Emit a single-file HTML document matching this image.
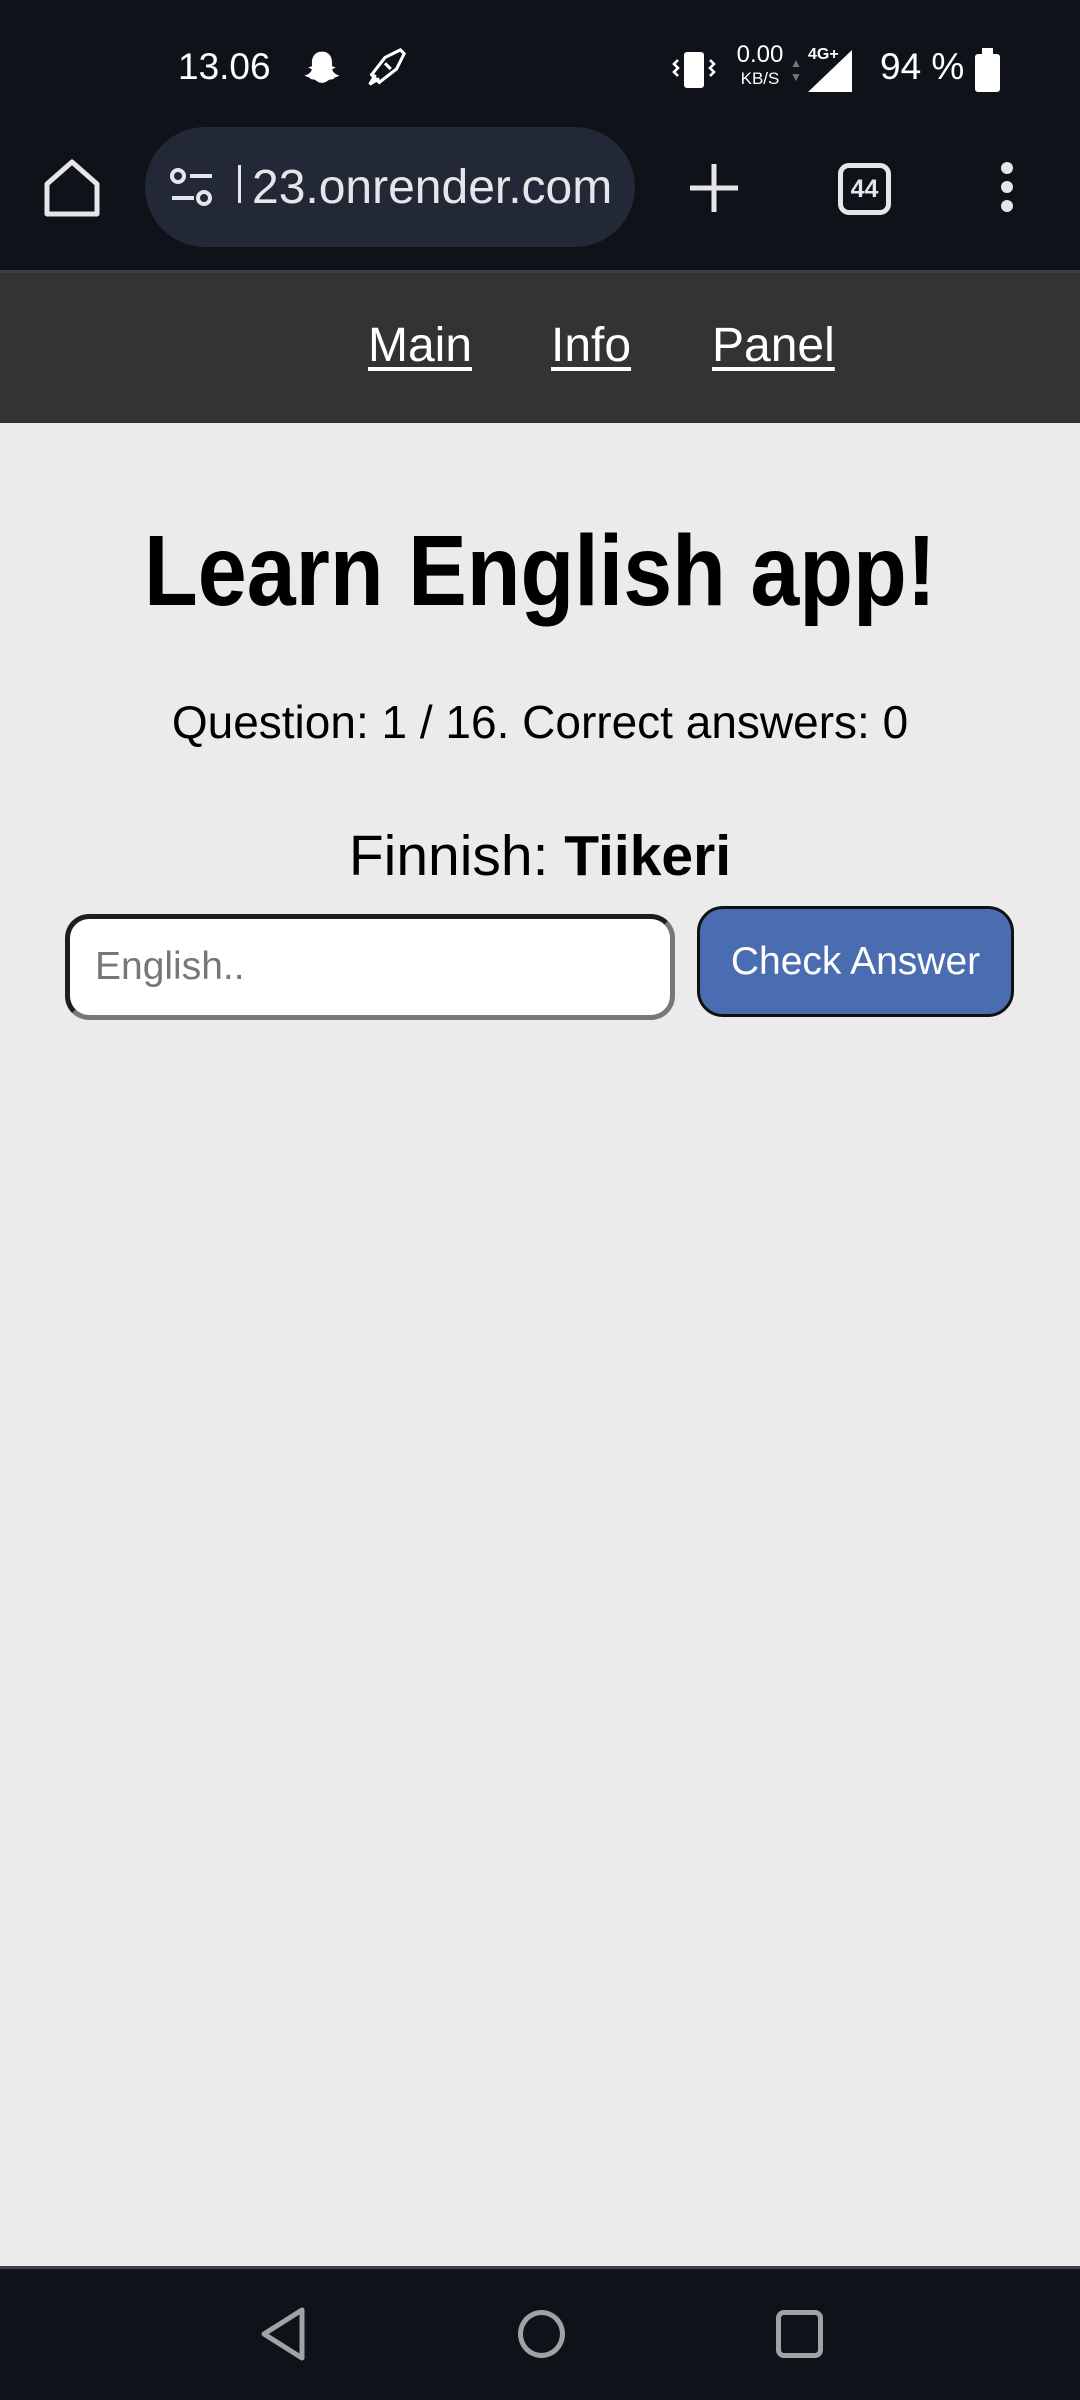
<!DOCTYPE html>
<html><head><meta charset="utf-8"><style>
*{margin:0;padding:0;box-sizing:border-box}
body{width:1080px;height:2400px;background:#ebebeb;font-family:"Liberation Sans",sans-serif;position:relative;overflow:hidden}
.abs{position:absolute}
</style></head><body>
<div class="abs" style="left:0;top:0;width:1080px;height:270px;background:#0f1219"></div>
<div class="abs" style="left:0;top:270px;width:1080px;height:3px;background:#3c4048"></div>
<div class="abs" style="left:0;top:273px;width:1080px;height:150px;background:#333"></div>
<!-- status bar -->
<div class="abs" style="left:178px;top:46px;color:#fff;font-size:37px;">13.06</div>
<svg class="abs" style="left:300px;top:48px" width="44" height="44" viewBox="0 0 24 24"><path d="M12 2c-4 0-5.5 3-5.5 6v2l-2 .5 2 1.2c-.5 1.5-2 2.8-4 3.3 1 .8 2.5.8 3 1.5.3.8 1.5.5 2.5.8 1 .5 2 1.7 4 1.7s3-1.2 4-1.7c1-.3 2.2 0 2.5-.8.5-.7 2-.7 3-1.5-2-.5-3.5-1.8-4-3.3l2-1.2-2-.5V8c0-3-1.5-6-5.5-6z" fill="#fff"/></svg>
<svg class="abs" style="left:362px;top:46px" width="46" height="46" viewBox="0 0 24 24" fill="none" stroke="#fff" stroke-width="1.6"><path d="M20 2l-8 4-7 9 4 4 9-7 4-8z M7 15l-3 5 5-3 M12 9l3 3"/></svg>
<svg class="abs" style="left:672px;top:50px" width="44" height="40" viewBox="0 0 22 20"><rect x="6" y="1" width="10" height="18" rx="1.5" fill="#fff"/><path d="M3 5l-2 2 2 2-2 2 2 2M19 5l2 2-2 2 2 2-2 2" stroke="#fff" stroke-width="1.3" fill="none"/></svg>
<div class="abs" style="left:732px;top:44px;color:#fff;font-size:24px;line-height:22px;text-align:center;width:56px">0.00<br><span style="font-size:17px">KB/S</span></div>
<div class="abs" style="left:790px;top:56px;color:#777;font-size:12px;line-height:14px">▲<br>▼</div>
<div class="abs" style="left:808px;top:46px;color:#fff;font-size:16px;font-weight:bold">4G+</div>
<svg class="abs" style="left:808px;top:50px" width="44" height="42" viewBox="0 0 44 42"><path d="M44 0V42H0z" fill="#fff"/></svg>
<div class="abs" style="left:880px;top:46px;color:#fff;font-size:37px;">94 %</div>
<div class="abs" style="left:975px;top:54px;width:25px;height:38px;background:#fff;border-radius:3px"></div>
<div class="abs" style="left:982px;top:48px;width:11px;height:7px;background:#fff"></div>
<!-- browser bar -->
<svg class="abs" style="left:42px;top:158px" width="60" height="62" viewBox="0 0 60 62" fill="none" stroke="#e6e6ea" stroke-width="5" stroke-linejoin="round"><path d="M5 26L30 4l25 22v30H5z"/></svg>
<div class="abs" style="left:145px;top:127px;width:490px;height:120px;background:#222835;border-radius:60px"></div>
<svg class="abs" style="left:168px;top:168px" width="48" height="40" viewBox="0 0 48 40" fill="none" stroke="#e6e6ea" stroke-width="4"><circle cx="10" cy="8" r="6"/><path d="M22 8h22M4 30h22"/><circle cx="36" cy="30" r="6"/></svg>
<div class="abs" style="left:238px;top:165px;width:3px;height:38px;background:#e6e6ea"></div>
<div class="abs" style="left:252px;top:160px;color:#e6e6ea;font-size:48px;">23.onrender.com</div>
<svg class="abs" style="left:688px;top:162px" width="52" height="52" viewBox="0 0 52 52" stroke="#e6e6ea" stroke-width="5"><path d="M26 2v48M2 26h48"/></svg>
<div class="abs" style="left:838px;top:163px;width:53px;height:52px;border:5px solid #e6e6ea;border-radius:11px;color:#e6e6ea;font-size:25px;font-weight:bold;text-align:center;line-height:42px">44</div>
<div class="abs" style="left:1001px;top:162px;width:12px;height:12px;border-radius:6px;background:#e6e6ea"></div>
<div class="abs" style="left:1001px;top:181px;width:12px;height:12px;border-radius:6px;background:#e6e6ea"></div>
<div class="abs" style="left:1001px;top:200px;width:12px;height:12px;border-radius:6px;background:#e6e6ea"></div>
<!-- nav -->
<a class="abs" style="left:368px;top:318px;color:#fff;font-size:48px;text-decoration:underline;text-underline-offset:6px">Main</a>
<a class="abs" style="left:551px;top:318px;color:#fff;font-size:48px;text-decoration:underline;text-underline-offset:6px">Info</a>
<a class="abs" style="left:712px;top:318px;color:#fff;font-size:48px;text-decoration:underline;text-underline-offset:6px">Panel</a>
<!-- content -->
<div class="abs" style="left:0;top:514px;width:1080px;text-align:center"><span style="display:inline-block;font-size:100px;font-weight:bold;transform:scaleX(0.88)">Learn English app!</span></div>
<div class="abs" style="left:0;top:695px;width:1080px;text-align:center;font-size:46px">Question: 1 / 16. Correct answers: 0</div>
<div class="abs" style="left:0;top:823px;width:1080px;text-align:center;font-size:57px">Finnish: <b>Tiikeri</b></div>
<div class="abs" style="left:65px;top:914px;width:610px;height:106px;background:#fff;border:5px solid;border-color:#1e1e1e #777 #777 #1e1e1e;border-radius:24px"></div>
<div class="abs" style="left:95px;top:967px;color:#777;font-size:39px;line-height:0">English..</div>
<div class="abs" style="left:697px;top:906px;width:317px;height:111px;background:#4a6cb0;border:3px solid #111;border-radius:26px;color:#fff;font-size:39px;text-align:center;line-height:105px">Check Answer</div>
<!-- bottom nav -->
<div class="abs" style="left:0;top:2266px;width:1080px;height:3px;background:#3c4048"></div>
<div class="abs" style="left:0;top:2269px;width:1080px;height:131px;background:#0f1219"></div>
<svg class="abs" style="left:258px;top:2306px" width="52" height="56" viewBox="0 0 52 56" fill="none" stroke="#a0a2a6" stroke-width="5" stroke-linejoin="round"><path d="M44 4V52L6 28z"/></svg>
<div class="abs" style="left:518px;top:2310px;width:47px;height:48px;border:5px solid #a0a2a6;border-radius:50%"></div>
<div class="abs" style="left:776px;top:2310px;width:47px;height:48px;border:5px solid #a0a2a6;border-radius:8px"></div>
</body></html>
